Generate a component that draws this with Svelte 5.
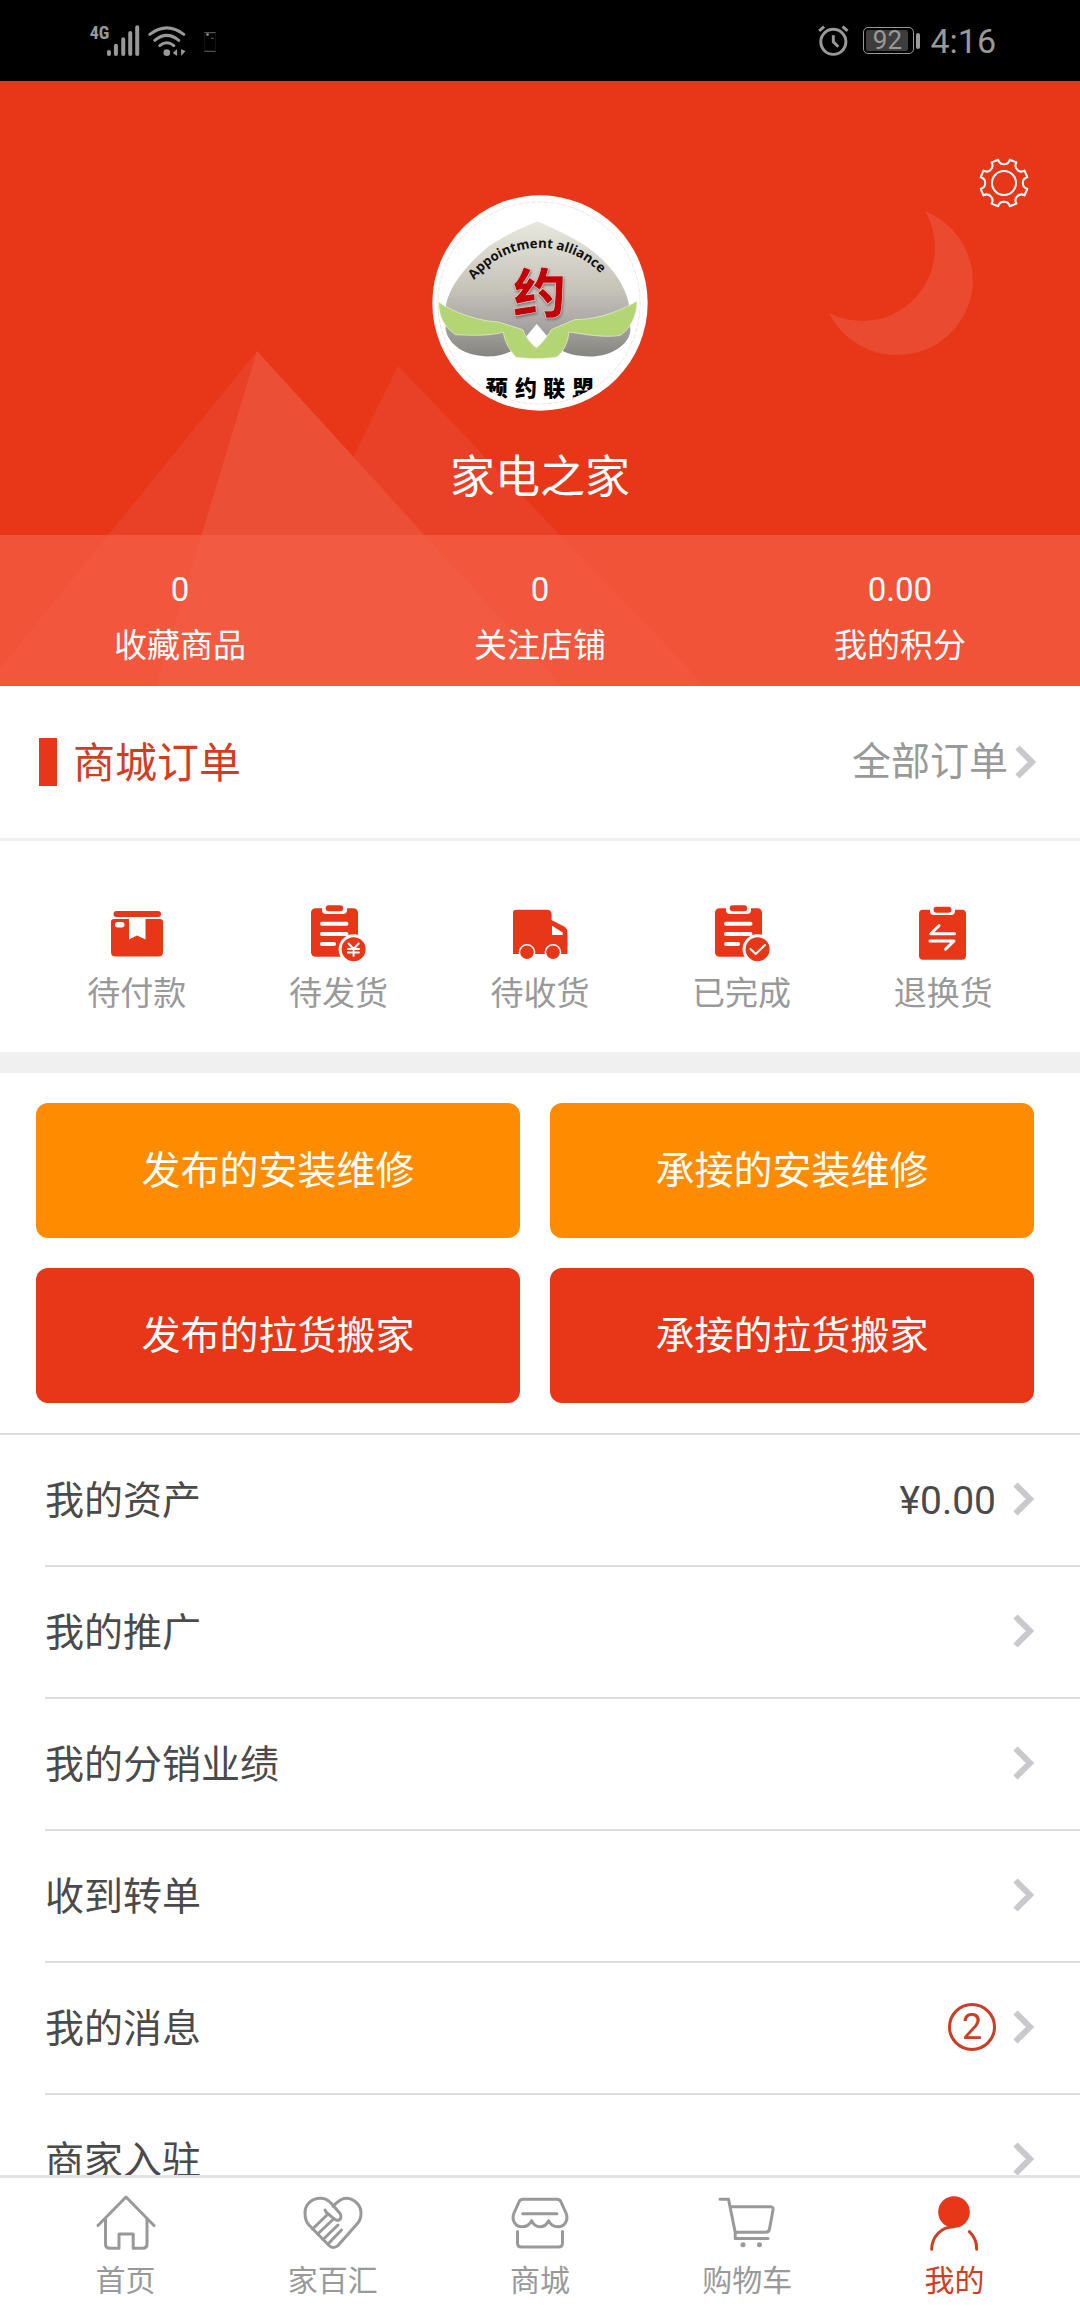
<script lang="ts">
	type Torder = { icon: string; label: string };
	type Trow = { label: string; value?: string; badge?: number };

	const stats = [
		{ value: '0', label: '收藏商品' },
		{ value: '0', label: '关注店铺' },
		{ value: '0.00', label: '我的积分' }
	];

	const orders: Torder[] = [
		{ icon: 'box', label: '待付款' },
		{ icon: 'yen', label: '待发货' },
		{ icon: 'truck', label: '待收货' },
		{ icon: 'done', label: '已完成' },
		{ icon: 'swap', label: '退换货' }
	];

	const actions = [
		{ label: '发布的安装维修', tone: 'orange' },
		{ label: '承接的安装维修', tone: 'orange' },
		{ label: '发布的拉货搬家', tone: 'red' },
		{ label: '承接的拉货搬家', tone: 'red' }
	];

	const rows: Trow[] = [
		{ label: '我的资产', value: '¥0.00' },
		{ label: '我的推广' },
		{ label: '我的分销业绩' },
		{ label: '收到转单' },
		{ label: '我的消息', badge: 2 },
		{ label: '商家入驻' }
	];

	const tabs = [
		{ icon: 'home', label: '首页' },
		{ icon: 'heart', label: '家百汇' },
		{ icon: 'shop', label: '商城' },
		{ icon: 'cart', label: '购物车' },
		{ icon: 'me', label: '我的' }
	];

	let current = $state('me');

	// eight teeth, with a round notch between each pair
	function gearPath() {
		const point = (deg: number) => {
			const a = (deg * Math.PI) / 180;
			return `${(26 + 24 * Math.sin(a)).toFixed(2)} ${(26 - 24 * Math.cos(a)).toFixed(2)}`;
		};
		let d = '';
		for (let i = 0; i < 8; i++) {
			d += `${i ? 'L' : 'M'}${point(i * 45 - 14)}A6 6 0 0 0 ${point(i * 45 + 14)}`;
		}
		return d + 'Z';
	}
</script>

{#snippet chevron()}
	<svg class="chevron" viewBox="0 0 22 34" aria-hidden="true">
		<path d="M2.500 2.500L17 17L2.500 31.500" />
	</svg>
{/snippet}

<div class="app">
	<div class="status">
		<svg class="signal" viewBox="80 60 400 120" aria-hidden="true">
			<text x="88" y="115">4G</text>
			<g stroke-width="12">
				<path d="M146 153v6M167 134v25M189 115v44M210 96v63M231 79v80" />
			</g>
			<g stroke-width="9">
				<path d="M269 100Q320 61 371 100M284 118Q320 88 356 118M299 134Q320 117 341 134" />
			</g>
			<circle cx="320" cy="155" r="10" />
			<path d="M351 144v21l-13-9zM363 144v21l13-14z" stroke="none" />
			<path d="M434 95h32M434 151h32" stroke-width="2" />
			<path d="M434 98v50M466 98v50" stroke="#222" stroke-width="2" />
			<rect x="439" y="97" width="7" height="7" />
			<path d="M454 112h6" stroke-width="2" />
		</svg>
		<div class="status-right">
			<svg class="alarm" viewBox="50 70 96 100" aria-hidden="true">
				<circle cx="99" cy="124" r="38" />
				<path d="M99 104v20l15 15M56 91l15-13M142 91l-15-13" />
			</svg>
			<div class="battery"><span>92</span></div>
			<span class="time">4:16</span>
		</div>
	</div>

	<main>
		<header>
			<svg class="scene" viewBox="0 81 1080 605" preserveAspectRatio="xMidYMax slice" aria-hidden="true">
				<path d="M398 366L705 686H240Z" fill="#e94127" />
				<path d="M257 351L562 686H-14Z" fill="#e94127" />
				<path d="M257 351L562 686H156Z" fill="#eb5036" />
				<path d="M925 211A76 76 0 0 1 973 281A76 76 0 0 1 829 313A73 73 0 0 0 925 211Z" fill="#ea4a2f" />
			</svg>
			<button class="settings" aria-label="设置">
				<svg viewBox="0 0 52 52">
					<path d={gearPath()} />
					<circle cx="26" cy="26" r="12" />
				</svg>
			</button>
			<div class="profile">
				<svg class="avatar" viewBox="36 45 648 650" role="img" aria-label="预约联盟">
					<defs>
						<linearGradient id="dome" x1="0" y1="0" x2="0" y2="1">
							<stop offset="0" stop-color="#e8e8df" />
							<stop offset="0.5" stop-color="#c6c3b9" />
							<stop offset="0.7" stop-color="#b0adaa" />
							<stop offset="1" stop-color="#868580" />
						</linearGradient>
						<path id="arc" d="M162 301A252 252 0 0 1 560 302" />
						<clipPath id="ring"><circle cx="355" cy="370" r="304" /></clipPath>
					</defs>
					<circle cx="360" cy="370" r="324" fill="#fff" />
					<circle cx="357" cy="370" r="304" fill="none" stroke="#e9d3cf" stroke-width="2" stroke-dasharray="14 5" />
					<path
						fill="url(#dome)"
						d="M352 125C400 145 455 170 500 200C570 250 615 310 628 375L632 455C625 500 570 531 510 531C470 531 435 522 412 505L350 433L290 505C265 522 240 531 200 531C130 528 85 495 76 450V385C82 320 150 245 205 200C245 172 300 145 352 125Z"
					/>
					<path fill="#fff" d="M350 433C345 452 337 463 327 472L350 503L374 472C362 460 354 450 350 433Z" />
					<path
						fill="#b4d573"
						stroke="#edf5d8"
						stroke-width="2"
						d="M55 367C100 400 180 425 235 427L308 450C318 475 335 495 350 505C368 490 382 470 394 450L465 420C540 420 610 390 652 364C652 410 630 450 600 468C550 475 500 465 447 457C445 490 430 515 412 532C370 540 330 538 288 533C265 510 252 480 250 458C200 470 150 468 105 465C70 440 55 410 55 367Z"
					/>
					<text class="logo-en"><textPath href="#arc">Appointment alliance</textPath></text>
					<text class="logo-mark" x="359" y="401">约</text>
					<text class="logo-cn" clip-path="url(#ring)" x="230 318 403 490" y="650">预约联盟</text>
				</svg>
				<h1>家电之家</h1>
			</div>
			<div class="stats">
				{#each stats as stat}
					<a href="#stats">
						<span>{stat.value}</span>
						<span>{stat.label}</span>
					</a>
				{/each}
			</div>
		</header>

		<section class="orders">
			<div class="orders-head">
				<h2>商城订单</h2>
				<a href="#orders">全部订单{@render chevron()}</a>
			</div>
			<div class="orders-list">
				{#each orders as order}
					<a href="#orders">
						<svg viewBox="0 0 60 60" aria-hidden="true">
							{#if order.icon === 'box'}
								<rect x="6.500" y="7" width="47.500" height="6" rx="3" />
								<path d="M7 15H22V35.500L30 31.500L38.500 35.500V15H53Q56 15 56 18V48Q56 52.500 51.500 52.500H8.500Q4 52.500 4 48V18Q4 15 7 15Z" />
								<rect class="cut" x="8" y="18" width="9.500" height="5.500" rx="2.700" />
							{:else if order.icon === 'truck'}
								<path d="M3 9Q3 5.700 6 5.700H37Q41.500 5.700 41.500 10V16L54 22.500Q57.500 24.500 57.500 28V50H3Z" />
								<path class="cut" d="M42 21.700L52.700 28.500V31H42Z" />
								<circle class="cut" cx="17" cy="48.300" r="8.300" />
								<circle class="cut" cx="43" cy="48.300" r="8.300" />
								<circle cx="17" cy="48.300" r="6.800" />
								<circle cx="43" cy="48.300" r="6.800" />
							{:else if order.icon === 'swap'}
								<rect x="6" y="5.700" width="47" height="50" rx="4" />
								<rect class="cut" x="17" y="1" width="25" height="10" rx="4" />
								<rect x="20.500" y="2.700" width="18" height="6" rx="3" />
								<path class="line" d="M41.500 29.700H17.800L26 21.700M17 37H41L32.500 45.300" />
							{:else}
								<rect x="3" y="4.300" width="47" height="48.400" rx="4.500" />
								<rect class="cut" x="14" y="0" width="25" height="10" rx="4" />
								<rect x="17.700" y="1.300" width="17.500" height="6" rx="3" />
								<path class="line bar" d="M14 19.700H38.500M14 30H38.500M14 40H26" />
								<circle class="cut" cx="45.600" cy="45.300" r="15" />
								<circle cx="45.600" cy="45.300" r="12" />
								{#if order.icon === 'yen'}
									<path class="line thin" d="M40.500 39.500L45.600 45L50.700 39.500M45.600 45V52M40 45H51M40 48.500H51" />
								{:else}
									<path class="line thin" d="M38.500 45L43.700 50L53 41" />
								{/if}
							{/if}
						</svg>
						<span>{order.label}</span>
					</a>
				{/each}
			</div>
		</section>

		<section class="actions">
			{#each actions as action}
				<button class={action.tone}>{action.label}</button>
			{/each}
		</section>

		<ul class="menu">
			{#each rows as row}
				<li>
					<a href="#menu">
						<span class="label">{row.label}</span>
						{#if row.value}<span class="value">{row.value}</span>{/if}
						{#if row.badge}<span class="badge">{row.badge}</span>{/if}
						{@render chevron()}
					</a>
				</li>
			{/each}
		</ul>
	</main>

	<nav>
		{#each tabs as tab}
			<button class:active={current === tab.icon} onclick={() => (current = tab.icon)}>
				<svg viewBox="0 0 60 60" aria-hidden="true">
					{#if tab.icon === 'home'}
						<path d="M2 32.500L30 4L58 32.500M9.500 26V51Q9.500 55.300 14 55.300H23V41H37.200V55.300H46.500Q51 55.300 51 51V26" />
					{:else if tab.icon === 'heart'}
						<path d="M24 20C28 23 31 27 34 27.300C38 27.500 39 23 37 20.500L28 10C24 6 21 5.300 17.500 5.300C8 5.300 2 12 2 20C2 25 3 29 6 32L26 52.500Q28 54.500 30 54.500Q33 54.500 35 52.500L54 31Q58 27 58 20C58 12 51 5.300 43 5.300C38 5.300 34 9 30 13.500" />
						<path d="M22 17L24.500 21.500L9.500 36M31 25.500L14.700 41M35 32L20 46.500M38.500 37L25.500 50.500" />
					{:else if tab.icon === 'shop'}
						<path d="M13 6.300H47Q50 6.300 51 9L56 20C59 28 54 33.700 48 33.700C43 33.700 40 31 38.700 27.700C37 31 34 33.700 30.200 33.700C26 33.700 23 31 21.700 27.700C20 31 17 33.700 12 33.700C6 33.700 1 28 4 20L9 9Q10 6.300 13 6.300Z" />
						<path d="M12.700 20.700H47M7.500 38.500V50Q7.500 54 11.500 54H48.500Q52.500 54 52.500 50V38.500" />
					{:else if tab.icon === 'cart'}
						<path d="M3 6.300H11.500L18.200 39.300V45.500H51M13.200 13.700H53Q56.500 13.700 56 17L52.500 36Q52 39.300 48.500 39.300H18.200" />
						<circle class="fill" cx="26" cy="51.700" r="2.500" />
						<circle class="fill" cx="42.500" cy="51.700" r="2.500" />
					{:else}
						<circle class="fill" cx="30" cy="19" r="15.800" />
						<path d="M7.700 56.300C7.700 44 17 33.800 30 33.800M45.300 38.700C50 43 52.700 49 52.700 56.300" />
					{/if}
				</svg>
				<span>{tab.label}</span>
			</button>
		{/each}
	</nav>
</div>

<style>
	:global(body) {
		margin: 0;
		background: #fff;
		font-family: Roboto, 'Noto Sans CJK SC', sans-serif;
	}

	.app {
		display: flex;
		flex-direction: column;
		height: 100vh;
		overflow: hidden;
	}

	a {
		color: inherit;
		text-decoration: none;
	}

	button {
		border: 0;
		padding: 0;
		font-family: inherit;
		cursor: pointer;
	}

	h1,
	h2 {
		margin: 0;
		font-weight: 400;
	}

	svg {
		display: block;
	}

	.status {
		flex: none;
		display: flex;
		justify-content: space-between;
		align-items: center;
		height: 81px;
		padding: 0 84px 0 87px;
		box-sizing: border-box;
		background: #000;
		color: #999;
	}

	.signal {
		width: 133px;
		height: 40px;
		fill: #999;
	}

	.signal g,
	.signal path {
		stroke: #999;
		stroke-linecap: round;
	}

	.signal g path {
		fill: none;
	}

	.signal path[stroke='none'] {
		stroke: none;
	}

	.signal path[stroke='#222'] {
		stroke: #222;
	}

	.signal text {
		font: 700 54px 'Liberation Sans Narrow', 'Roboto Condensed', Roboto, sans-serif;
	}

	.status-right {
		display: flex;
		align-items: center;
	}

	.alarm {
		width: 32px;
		height: 33px;
		margin-right: 14px;
		fill: none;
		stroke: #999;
		stroke-width: 9;
	}

	.battery {
		position: relative;
		width: 51px;
		height: 27px;
		margin-right: 16px;
		padding: 2px;
		box-sizing: border-box;
		border: 1px solid #999;
		border-radius: 5px;
	}

	.battery::after {
		content: '';
		position: absolute;
		top: 5px;
		right: -7px;
		width: 4px;
		height: 16px;
		border-radius: 2px;
		background: #999;
	}

	.battery span {
		display: block;
		width: 42px;
		border-radius: 2px;
		background: #3d3d3d;
		font-size: 26px;
		line-height: 21px;
		text-align: center;
	}

	.time {
		font-size: 34px;
		line-height: 40px;
	}

	main {
		flex: 1;
		min-height: 0;
		overflow-y: auto;
		scrollbar-width: none;
	}

	header {
		position: relative;
		background: #e73618;
		color: #fff;
	}

	.scene {
		position: absolute;
		inset: 0;
		width: 100%;
		height: 100%;
	}

	.settings {
		position: absolute;
		top: 76px;
		right: 50px;
		background: none;
	}

	.settings svg {
		width: 52px;
		height: 52px;
		fill: none;
		stroke: #fff;
		stroke-width: 2;
		stroke-linejoin: round;
	}

	.profile {
		position: relative;
		display: flex;
		flex-direction: column;
		align-items: center;
		width: fit-content;
		margin: 0 auto;
		padding: 114px 0 24px;
	}

	.avatar {
		width: 216px;
		height: 216px;
	}

	.logo-en {
		font: 700 40px 'Open Sans', 'Noto Sans', sans-serif;
		fill: #111;
	}

	.logo-mark {
		font: 900 160px 'Noto Sans CJK SC', sans-serif;
		text-anchor: middle;
		fill: #c10008;
		stroke: #e6d5cc;
		stroke-width: 2;
		filter: drop-shadow(2px 5px 3px #777);
	}

	.logo-cn {
		font: 900 66px 'Noto Sans CJK SC', sans-serif;
		text-anchor: middle;
		fill: #000;
	}

	h1 {
		margin-top: 34px;
		font-size: 45px;
		line-height: 66px;
	}

	.stats {
		position: relative;
		display: flex;
		padding: 27px 0 12px;
		background: rgba(245, 94, 70, 0.72);
	}

	.stats a {
		flex: 1;
		display: flex;
		flex-direction: column;
		align-items: center;
		font-size: 33px;
		line-height: 56px;
	}

	.orders-head {
		display: flex;
		justify-content: space-between;
		align-items: center;
		height: 152px;
		padding: 0 43px 0 39px;
		border-bottom: 3px solid #f0f0f0;
	}

	h2 {
		display: flex;
		align-items: center;
		gap: 16px;
		color: #d13d22;
		font-size: 42px;
		line-height: 64px;
	}

	h2::before {
		content: '';
		width: 18px;
		height: 48px;
		margin-bottom: 3px;
		background: #e73618;
	}

	.orders-head h2 {
		padding-top: 3px;
	}

	.orders-head a {
		display: flex;
		align-items: center;
		gap: 7px;
		color: #999;
		font-size: 39px;
		line-height: 60px;
	}

	.chevron {
		flex: none;
		width: 22px;
		height: 34px;
		fill: none;
		stroke: #c8c8cd;
		stroke-width: 6;
	}

	.orders-list {
		display: flex;
		padding: 63px 36px 34px;
		border-bottom: 21px solid #f0f0f0;
	}

	.orders-list a {
		flex: 1;
		display: flex;
		flex-direction: column;
		align-items: center;
		gap: 6px;
		color: #999;
		font-size: 33px;
		line-height: 48px;
	}

	.orders-list svg {
		width: 60px;
		height: 60px;
		fill: #e73618;
	}

	.orders-list .cut {
		fill: #fff;
	}

	.line {
		fill: none;
		stroke: #fff;
		stroke-width: 3;
		stroke-linecap: round;
		stroke-linejoin: round;
	}

	.bar {
		stroke-width: 4;
	}

	.thin {
		stroke-width: 2;
	}

	.actions {
		display: grid;
		grid-template-columns: 1fr 1fr;
		gap: 30px;
		padding: 30px 46px 30px 36px;
	}

	.actions button {
		height: 135px;
		border-radius: 12px;
		color: #fff;
		font-size: 39px;
		line-height: 60px;
	}

	.actions .orange {
		background: #ff8c00;
	}

	.actions .red {
		background: #e73618;
	}

	.menu {
		margin: 0;
		padding: 0;
		list-style: none;
		border-top: 2px solid #dcdcdc;
	}

	.menu li {
		margin-left: 45px;
		border-bottom: 2px solid #dcdcdc;
	}

	.menu a {
		display: flex;
		align-items: center;
		height: 128px;
		padding: 0 45px 2px 0;
		color: #4a4a4a;
		font-size: 39px;
		line-height: 60px;
	}

	.label {
		flex: 1;
	}

	.label,
	.value {
		padding-top: 4px;
	}

	.value,
	.badge {
		margin-right: 17px;
	}

	.badge {
		width: 48px;
		height: 48px;
		box-sizing: border-box;
		border: 3px solid #cb3d24;
		border-radius: 50%;
		color: #cb3d24;
		font-size: 36px;
		line-height: 42px;
		text-align: center;
	}

	nav {
		flex: none;
		display: flex;
		padding: 15px 22px 13px;
		border-top: 3px solid #e4e4e4;
		background: #fff;
	}

	nav button {
		flex: 1;
		display: flex;
		flex-direction: column;
		align-items: center;
		gap: 10px;
		background: none;
		color: #999;
		font-size: 30px;
		line-height: 36px;
	}

	nav svg {
		width: 60px;
		height: 60px;
		fill: none;
		stroke: #999;
		stroke-width: 3;
		stroke-linecap: round;
		stroke-linejoin: round;
	}

	nav .fill {
		fill: #999;
		stroke: none;
	}

	.active {
		color: #d13d22;
	}

	.active svg {
		stroke: #d13d22;
	}

	.active .fill {
		fill: #e73618;
	}
</style>
